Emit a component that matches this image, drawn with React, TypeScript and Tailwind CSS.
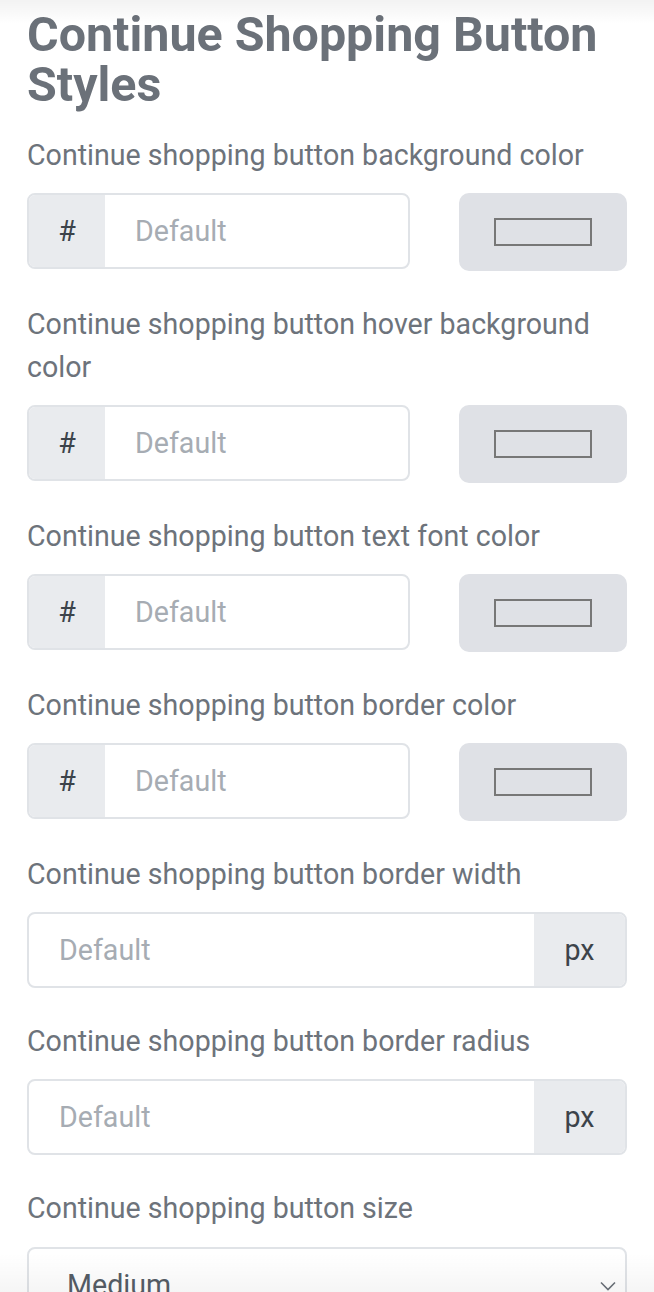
import React from "react";

const font = { fontFamily: "Roboto, 'Liberation Sans', sans-serif" };

function Label({ children }: { children: React.ReactNode }) {
  return (
    <div className="text-[28.6px] leading-[43px] text-[#6d737b]">{children}</div>
  );
}

function ColorField({ label }: { label: string }) {
  return (
    <div className="flex flex-col gap-[16px]">
      <Label>{label}</Label>
      <div className="flex items-start gap-[49px]">
        <div className="flex h-[76px] flex-1 overflow-hidden rounded-[8px] border-2 border-[#e0e3e7] bg-white">
          <div className="flex w-[76px] items-center justify-center bg-[#e9ebee] text-[28.6px] text-[#3c434a]">
            #
          </div>
          <div className="flex flex-1 items-center pl-[30px] text-[28.6px] text-[#a6acb3]">
            Default
          </div>
        </div>
        <div className="flex h-[78px] w-[168px] items-center justify-center rounded-[10px] bg-[#dfe1e6]">
          <div className="h-[28px] w-[98px] border-2 border-[#777777]" />
        </div>
      </div>
    </div>
  );
}

function PxField({ label }: { label: string }) {
  return (
    <div className="flex flex-col gap-[16px]">
      <Label>{label}</Label>
      <div className="flex h-[76px] overflow-hidden rounded-[8px] border-2 border-[#e0e3e7] bg-white">
        <div className="flex flex-1 items-center pl-[30px] text-[28.6px] text-[#a6acb3]">
          Default
        </div>
        <div className="flex w-[91px] items-center justify-center bg-[#e9ebee] text-[28.6px] text-[#3c434a]">
          px
        </div>
      </div>
    </div>
  );
}

export default function App() {
  return (
    <div className="relative min-h-[1292px] w-[654px] overflow-hidden bg-white" style={font}>
      <div className="pointer-events-none absolute inset-x-0 top-0 h-[24px] bg-gradient-to-b from-black/[0.05] to-black/0" />
      <div className="px-[27px] pt-[10px]">
        <h2 className="text-[48.4px] font-bold leading-[50px] text-[#6b7179]">
          Continue Shopping Button Styles
        </h2>
        <div className="mt-[24px] flex flex-col gap-[32px]">
          <ColorField label="Continue shopping button background color" />
          <ColorField label="Continue shopping button hover background color" />
          <ColorField label="Continue shopping button text font color" />
          <ColorField label="Continue shopping button border color" />
          <PxField label="Continue shopping button border width" />
          <PxField label="Continue shopping button border radius" />
          <div className="flex flex-col gap-[17px]">
            <Label>Continue shopping button size</Label>
            <div className="flex h-[76px] items-center justify-between rounded-[8px] border-2 border-[#e0e3e7] bg-white pl-[38px] pr-[9px]">
              <span className="text-[28.6px] text-[#555d66]">Medium</span>
              <svg width="16" height="10" viewBox="0 0 16 10" className="mt-[2px]">
                <path d="M1 1.5 L8 8.5 L15 1.5" fill="none" stroke="#6b7179" strokeWidth="1.6" />
              </svg>
            </div>
          </div>
        </div>
      </div>
      <div className="pointer-events-none absolute inset-x-0 bottom-0 h-[70px] bg-gradient-to-b from-black/0 to-black/[0.07]" />
    </div>
  );
}
